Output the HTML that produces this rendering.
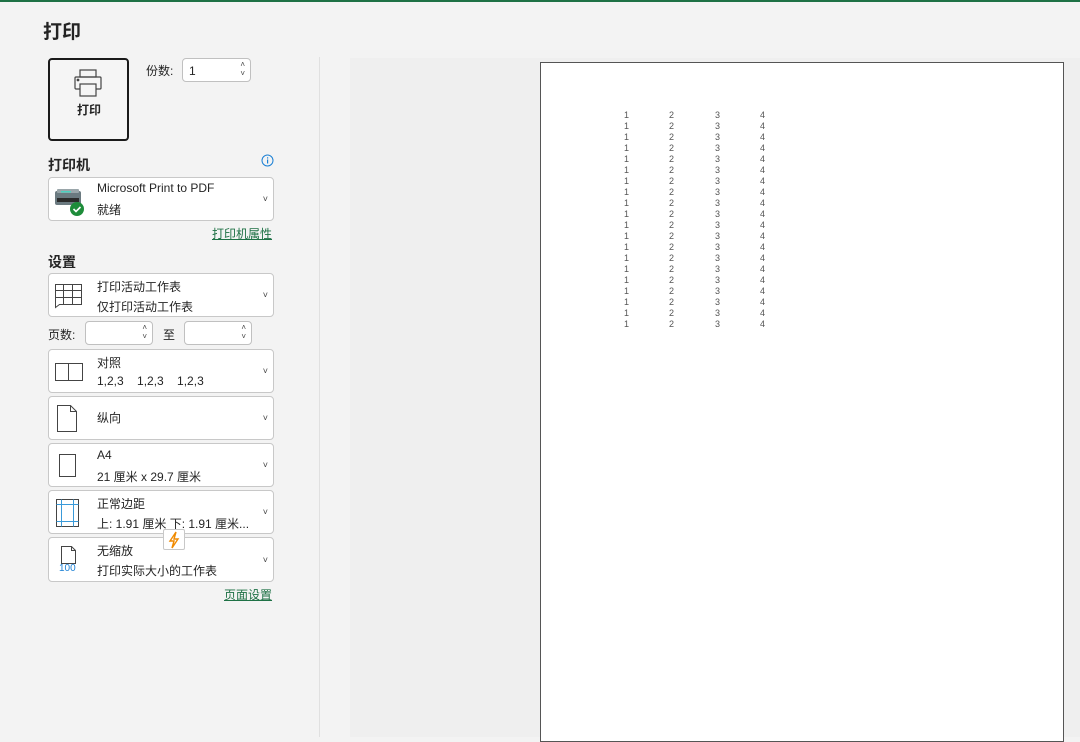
<!DOCTYPE html>
<html><head><meta charset="utf-8"><style>
*{margin:0;padding:0;box-sizing:border-box}
body{width:1080px;height:737px;overflow:hidden;background:#f3f3f3;font-family:"Liberation Sans","Noto Sans CJK SC",sans-serif;color:#242424;position:relative;font-size:12px}
.a{position:absolute}
.box{position:absolute;left:48px;width:226px;background:#fff;border:1px solid #c8c8c8;border-radius:4px}
.box .t1,.box .t2{position:absolute;left:48px;font-size:12px;white-space:nowrap}
.chev{position:absolute;right:5px;top:50%;margin-top:-5px;font-size:9px;color:#444}
.spin{position:absolute;background:#fff;border:1px solid #c0c0c0;border-radius:4px;height:24px}
.spin .ar{position:absolute;right:5px;top:1px;font-size:8px;line-height:9px;color:#444}
.lnk{position:absolute;color:#1e7145;text-decoration:underline;font-size:12px}
.h{position:absolute;font-weight:bold;font-size:14px;color:#242424}
.n{position:absolute;font-size:9px;color:#555;line-height:11px}
</style></head><body>
<div class="a" style="left:0;top:0;width:1080px;height:2px;background:#1e7145"></div>
<div class="a" style="left:43px;top:17px;font-size:19px;font-weight:bold">打印</div>

<div class="a" style="left:48px;top:58px;width:81px;height:83px;border:2px solid #1a1a1a;border-radius:4px;background:#f5f5f5"></div>
<svg class="a" style="left:73px;top:69px" width="32" height="30" viewBox="0 0 32 30" fill="none" stroke="#444" stroke-width="1.2"><rect x="7" y="1" width="16" height="7"/><rect x="2" y="8" width="26" height="12" rx="1"/><rect x="7" y="15" width="16" height="12" fill="#f5f5f5"/><circle cx="5" cy="11" r="0.8" fill="#444"/></svg>
<div class="a" style="left:77px;top:101px;font-size:12px;font-weight:bold">打印</div>

<div class="a" style="left:146px;top:62px;font-size:12px">份数:</div>
<div class="spin" style="left:182px;top:58px;width:69px"><span class="a" style="left:6px;top:5px">1</span><div class="ar">˄<br>˅</div></div>

<div class="h" style="left:48px;top:155px">打印机</div>
<svg class="a" style="left:261px;top:154px" width="13" height="13"><circle cx="6.5" cy="6.5" r="5.5" fill="none" stroke="#1a7fd4"/><rect x="6" y="5.5" width="1.2" height="4" fill="#1a7fd4"/><rect x="6" y="3.3" width="1.2" height="1.2" fill="#1a7fd4"/></svg>
<div class="box" style="top:177px;height:44px">
 <svg class="a" style="left:4px;top:9px" width="32" height="30"><rect x="2" y="4" width="26" height="14" rx="2" fill="#6b7a80"/><rect x="4" y="2" width="22" height="4" rx="1" fill="#9aa6aa"/><rect x="8" y="4" width="10" height="1.5" fill="#4ad1c0"/><rect x="4" y="11" width="22" height="4" fill="#2b2b2b"/><circle cx="24" cy="22" r="7" fill="#1e8c3a"/><path d="M20.5 22l2.5 2.5 4.5-4.5" stroke="#fff" stroke-width="1.6" fill="none"/></svg>
 <div class="t1" style="top:3px">Microsoft Print to PDF</div>
 <div class="t2" style="top:23px">就绪</div><div class="chev">˅</div>
</div>
<div class="lnk" style="left:212px;top:225px">打印机属性</div>

<div class="h" style="left:48px;top:252px">设置</div>
<div class="box" style="top:273px;height:44px">
 <svg class="a" style="left:5px;top:9px" width="30" height="26" fill="none" stroke="#444"><path d="M1.5 1.5h26v20h-22l-4 3z"/><path d="M1.5 7.5h26M1.5 14.5h26M9.5 1.5v20M18.5 1.5v20"/></svg>
 <div class="t1" style="top:4px">打印活动工作表</div><div class="t2" style="top:24px">仅打印活动工作表</div><div class="chev">˅</div>
</div>
<div class="a" style="left:48px;top:326px">页数:</div>
<div class="spin" style="left:85px;top:321px;width:68px"><div class="ar">˄<br>˅</div></div>
<div class="a" style="left:163px;top:326px">至</div>
<div class="spin" style="left:184px;top:321px;width:68px"><div class="ar">˄<br>˅</div></div>

<div class="box" style="top:349px;height:44px">
 <svg class="a" style="left:5px;top:12px" width="30" height="20" fill="none" stroke="#444"><rect x="1.5" y="1.5" width="27" height="17"/><path d="M14.5 1.5v17"/></svg>
 <div class="t1" style="top:4px">对照</div><div class="t2" style="top:24px">1,2,3&nbsp;&nbsp;&nbsp;&nbsp;1,2,3&nbsp;&nbsp;&nbsp;&nbsp;1,2,3</div><div class="chev">˅</div>
</div>
<div class="box" style="top:396px;height:44px">
 <svg class="a" style="left:7px;top:7px" width="24" height="30" fill="none" stroke="#444"><path d="M1.5 1.5h13l6 6v20h-19z M14.5 1.5v6h6"/></svg>
 <div class="t1" style="top:12px">纵向</div><div class="chev">˅</div>
</div>
<div class="box" style="top:443px;height:44px">
 <svg class="a" style="left:9px;top:9px" width="20" height="26" fill="none" stroke="#444"><rect x="1.5" y="1.5" width="16" height="22"/></svg>
 <div class="t1" style="top:4px">A4</div><div class="t2" style="top:24px">21 厘米 x 29.7 厘米</div><div class="chev">˅</div>
</div>
<div class="box" style="top:490px;height:44px">
 <svg class="a" style="left:6px;top:7px" width="26" height="30" fill="none"><rect x="1.5" y="1.5" width="22" height="27" stroke="#444"/><path d="M6.5 1.5v27M18.5 1.5v27M1.5 6.5h22M1.5 23.5h22" stroke="#3a9ad9"/></svg>
 <div class="t1" style="top:4px">正常边距</div><div class="t2" style="top:24px">上: 1.91 厘米 下: 1.91 厘米...</div><div class="chev">˅</div>
</div>
<div class="box" style="top:537px;height:45px">
 <svg class="a" style="left:11px;top:7px" width="18" height="20" fill="none" stroke="#444"><path d="M1.5 1.5h10l4 4v13h-14z M11.5 1.5v4h4"/></svg>
 <div class="a" style="left:10px;top:25px;font-size:10px;color:#1a7fd4">100</div>
 <div class="t1" style="top:4px">无缩放</div><div class="t2" style="top:24px">打印实际大小的工作表</div><div class="chev">˅</div>
</div>
<div class="a" style="left:163px;top:529px;width:22px;height:21px;background:#fff;border:1px solid #c8c8c8;border-radius:2px"><svg width="20" height="19"><path d="M12 2l-6 9h4l-2 7 6-9h-4z" fill="none" stroke="#f08a00" stroke-width="1.4"/></svg></div>
<div class="lnk" style="left:224px;top:586px">页面设置</div>

<div class="a" style="left:319px;top:57px;width:1px;height:680px;background:#e0e0e0"></div>
<div class="a" style="left:350px;top:58px;width:730px;height:679px;background:#efefef"></div>
<div class="a" style="left:540px;top:62px;width:524px;height:680px;background:#fff;border:1px solid #555"></div>
<div class="n" style="left:624px;top:110px">1<br>1<br>1<br>1<br>1<br>1<br>1<br>1<br>1<br>1<br>1<br>1<br>1<br>1<br>1<br>1<br>1<br>1<br>1<br>1</div>
<div class="n" style="left:669px;top:110px">2<br>2<br>2<br>2<br>2<br>2<br>2<br>2<br>2<br>2<br>2<br>2<br>2<br>2<br>2<br>2<br>2<br>2<br>2<br>2</div>
<div class="n" style="left:715px;top:110px">3<br>3<br>3<br>3<br>3<br>3<br>3<br>3<br>3<br>3<br>3<br>3<br>3<br>3<br>3<br>3<br>3<br>3<br>3<br>3</div>
<div class="n" style="left:760px;top:110px">4<br>4<br>4<br>4<br>4<br>4<br>4<br>4<br>4<br>4<br>4<br>4<br>4<br>4<br>4<br>4<br>4<br>4<br>4<br>4</div>
</body></html>
